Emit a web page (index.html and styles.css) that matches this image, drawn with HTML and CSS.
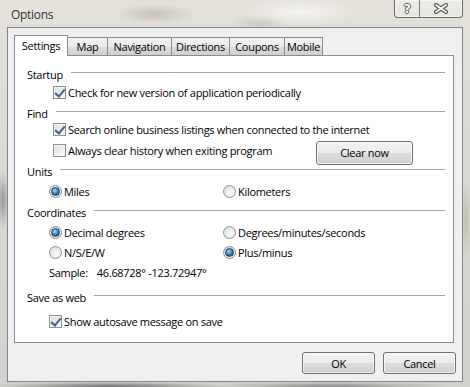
FILE: index.html
```html
<!DOCTYPE html>
<html lang="en">
<head>
  <meta charset="UTF-8" />
  <title>Options</title>
  <link rel="stylesheet" href="styles.css">
</head>
<body>
  <div class="window">
    <!-- Title bar -->
    <div class="titlebar">
      <span class="title">Options</span>
      <div class="caption">
        <span class="cbtn cbtn-help">?</span>
        <span class="cbtn cbtn-close">
          <svg width="16" height="11" viewBox="0 0 16 11">
            <path class="x-out" d="M3,2 L13,9 M13,2 L3,9" />
            <path class="x-in" d="M3,2 L13,9 M13,2 L3,9" />
          </svg>
        </span>
      </div>
    </div>

    <!-- Client area -->
    <div class="client">
      <div class="tabs">
        <div class="tab tab-settings active">Settings</div>
        <div class="tab tab-map">Map</div>
        <div class="tab tab-nav">Navigation</div>
        <div class="tab tab-dir">Directions</div>
        <div class="tab tab-coupons">Coupons</div>
        <div class="tab tab-mobile">Mobile</div>
      </div>

      <div class="panel">
        <div class="group-head"><span>Startup</span><span class="rule"></span></div>
        <div class="opt opt-check tight2">
          <span class="check on"></span><span>Check for new version of application periodically</span>
        </div>

        <div class="group-head"><span>Find</span><span class="rule"></span></div>
        <div class="opt opt-check tight0">
          <span class="check on"></span><span>Search online business listings when connected to the internet</span>
        </div>
        <div class="opt opt-check opt-clear">
          <div class="cell"><span class="check"></span><span>Always clear history when exiting program</span></div>
          <button class="btn btn-clear">Clear now</button>
        </div>

        <div class="group-head"><span>Units</span><span class="rule"></span></div>
        <div class="opt opt-two">
          <div class="cell"><span class="radio on"></span><span>Miles</span></div>
          <div class="cell"><span class="radio"></span><span>Kilometers</span></div>
        </div>

        <div class="group-head"><span>Coordinates</span><span class="rule"></span></div>
        <div class="opt opt-two">
          <div class="cell"><span class="radio on"></span><span>Decimal degrees</span></div>
          <div class="cell"><span class="radio"></span><span>Degrees/minutes/seconds</span></div>
        </div>
        <div class="opt opt-two">
          <div class="cell"><span class="radio"></span><span>N/S/E/W</span></div>
          <div class="cell"><span class="radio on"></span><span>Plus/minus</span></div>
        </div>
        <div class="opt opt-sample">
          <span>Sample:</span><span class="sample-val">46.68728° -123.72947°</span>
        </div>

        <div class="group-head head-save"><span>Save as web</span><span class="rule"></span></div>
        <div class="opt opt-last">
          <span class="check on"></span><span>Show autosave message on save</span>
        </div>
      </div>

      <div class="footer">
        <button class="btn">OK</button>
        <button class="btn">Cancel</button>
      </div>
    </div>
  </div>
</body>
</html>
```
FILE: styles.css
```css
/* BASE */
* {
  margin: 0; padding: 0;
  box-sizing: border-box;
}
body {
  font-family: 'Open Sans', 'Noto Sans', sans-serif;
  font-size: 11px;
  letter-spacing: -0.3px;
  color: #000;
  overflow: hidden;
}

/* WINDOW FRAME (aero glass) */
.window {
  width: 470px; height: 387px;
  padding: 0 7px 5px;
  display: flex; flex-direction: column;
  background:
    radial-gradient(ellipse 40px 10px at 155px 14px, rgba(150,140,125,0.35), transparent),
    radial-gradient(ellipse 60px 14px at 300px 12px, rgba(255,255,255,0.6), transparent),
    radial-gradient(ellipse 30px 10px at 260px 24px, rgba(170,165,150,0.35), transparent),
    radial-gradient(ellipse 6px 30px at 3px 200px, rgba(90,90,90,0.5), transparent),
    radial-gradient(ellipse 6px 40px at 466px 220px, rgba(160,170,120,0.45), transparent),
    radial-gradient(ellipse 120px 4px at 110px 386px, rgba(60,60,60,0.6), transparent),
    radial-gradient(ellipse 120px 4px at 330px 386px, rgba(80,80,80,0.5), transparent),
    linear-gradient(to bottom, #e4e1da 0%, #d9dbd6 40%, #cfd2cd 100%);
}

/* TITLE BAR */
.titlebar {
  height: 27px;
  display: flex; justify-content: space-between; align-items: flex-start;
}
.title {
  padding: 6px 0 0 4px;
  font-size: 12px;
  color: #2e2e2e;
  text-shadow: 0 0 6px rgba(255,255,255,0.9);
}
.caption {
  display: flex;
  height: 18px;
  border: 1px solid #6a6a6a; border-top: none;
  border-radius: 0 0 4px 4px;
  box-shadow: inset 0 0 0 1px rgba(255,255,255,0.55);
  background: linear-gradient(to bottom, rgba(255,255,255,0.35), rgba(235,235,230,0.55));
  overflow: hidden;
}
.cbtn {
  height: 17px;
  display: flex; align-items: center; justify-content: center;
}
.cbtn-help {
  width: 25px;
  border-right: 1px solid #7a7a7a;
  font-family: 'DejaVu Sans', sans-serif;
  font-weight: bold; font-size: 12px;
  color: #fff;
  text-shadow: 1px 0 0 #555, -1px 0 0 #555, 0 1px 0 #555, 0 -1px 0 #555;
}
.cbtn-close { width: 42px; }
.x-out { stroke: #555; stroke-width: 4; stroke-linecap: round; fill: none; }
.x-in { stroke: #fff; stroke-width: 2; stroke-linecap: round; fill: none; }

/* CLIENT AREA */
.client {
  flex: 1;
  border: 1px solid #7d8790;
  background: #f0f0f0;
  padding: 7px 0 0 6px;
  display: flex; flex-direction: column;
}

/* TABS */
.tabs {
  display: flex; align-items: flex-end;
  height: 20px;
}
.tab {
  height: 18px;
  border: 1px solid #898c95; border-bottom: none;
  margin-left: -1px;
  display: flex; align-items: center; justify-content: center;
  background: linear-gradient(to bottom, #f2f2f2 0%, #ebebeb 50%, #dddddd 51%, #cfcfcf 100%);
  white-space: nowrap;
}
.tab:first-child { margin-left: 0; }
.tab.active {
  height: 21px;
  padding-bottom: 2px;
  margin-bottom: -1px;
  background: #fff;
  position: relative; z-index: 1;
}
.tab-settings { width: 54px; }
.tab-map { width: 41px; }
.tab-nav { width: 65px; }
.tab-dir { width: 59px; }
.tab-coupons { width: 56px; }
.tab-mobile { width: 39px; }

/* PANEL */
.panel {
  width: 440px; height: 288px;
  border: 1px solid #898c95;
  background: #fff;
  padding: 10px 8px 0 12px;
}
.group-head {
  height: 16px; margin-top: 5px;
  display: flex; align-items: center;
}
.group-head:first-child { margin-top: 0; }
.head-save { margin-top: 9px; }
.rule {
  flex: 1;
  margin: 0 0 3px 8px;
  border-top: 1px solid #a6a6a6;
}

.opt {
  height: 16px; margin-top: 4px;
  padding-left: 22px;
  display: flex; align-items: center;
  white-space: nowrap;
}
.opt-check { padding-left: 26px; }
.tight2 { margin-top: 2px; }
.tight0 { margin-top: 0; }
.opt-last { margin-top: 8px; }
.cell { display: flex; align-items: center; }
.opt-two {
  display: grid; grid-template-columns: 174px auto;
}
.opt-clear {
  margin-top: 5px;
  display: grid;
  grid-template-columns: 263px 97px;
  grid-template-rows: 16px;
  align-items: center;
}
.sample-val { margin-left: 9px; }

/* CHECKBOX */
.check {
  width: 13px; height: 13px;
  margin-right: 2px;
  border: 1px solid #8e8f8f;
  background: linear-gradient(135deg, #dcdcdc, #fdfdfd);
  box-shadow: inset 0 0 0 1px #f4f4f4;
  flex-shrink: 0;
  position: relative;
}
.check.on::after {
  content: '';
  position: absolute; left: 3px; top: 0px;
  width: 4px; height: 8px;
  border: solid #4a5f97;
  border-width: 0 2px 2px 0;
  transform: rotate(40deg);
}

/* RADIO */
.radio {
  width: 13px; height: 13px;
  margin-right: 2px;
  border: 1px solid #8e8f8f;
  border-radius: 50%;
  background: radial-gradient(circle at 60% 65%, #fbfbfb, #d8d8d8);
  flex-shrink: 0;
  display: flex; align-items: center; justify-content: center;
}
.radio.on::after {
  content: '';
  width: 7px; height: 7px;
  border-radius: 50%;
  border: 1px solid #1f4566;
  background: radial-gradient(circle at 40% 35%, #a9dcf6, #2e77ac 55%, #16405f);
}

/* BUTTONS */
.btn {
  font: inherit; color: #000; letter-spacing: inherit;
  height: 23px;
  border: 1px solid #707070;
  border-radius: 3px;
  background: linear-gradient(to bottom, #f2f2f2 0%, #ebebeb 50%, #dddddd 51%, #cfcfcf 100%);
  box-shadow: inset 0 0 0 1px rgba(255,255,255,0.7);
}
.btn-clear { width: 97px; height: 24px; margin-top: 5px; }

/* FOOTER */
.footer {
  display: flex; justify-content: flex-end; gap: 8px;
  padding: 9px 6px 0 0;
}
.footer .btn { width: 73px; height: 22px; }
```
